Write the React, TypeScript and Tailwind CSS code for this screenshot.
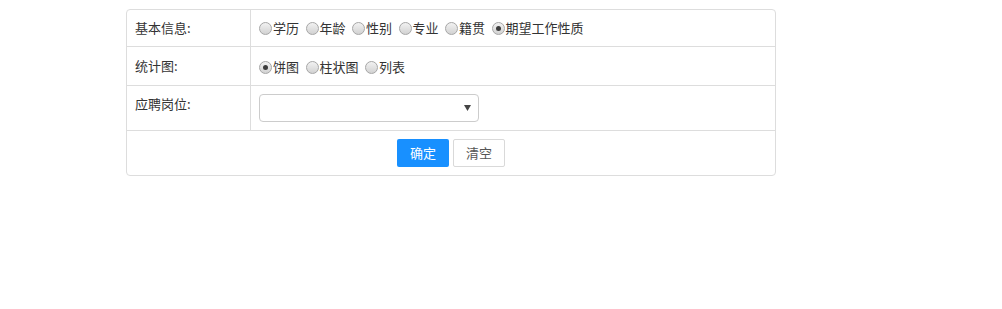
import React from "react";

const font = { fontFamily: '"Noto Sans CJK SC", "Noto Sans", sans-serif' };

function Radio({ label, checked }: { label: string; checked?: boolean }) {
  return (
    <span className="flex items-center">
      <span className="mr-[1px] flex h-[13px] w-[13px] items-center justify-center rounded-full border border-[#a6a6a6] bg-gradient-to-b from-[#f2f2f2] to-[#d2d2d2]">
        {checked && <span className="h-[5px] w-[5px] rounded-full bg-[#3c3c3c]" />}
      </span>
      <span className="text-[13px] leading-[20px] text-[#333]">{label}</span>
    </span>
  );
}

export default function App() {
  return (
    <div className="min-h-[309px] bg-white pl-[126px] pt-[9px]" style={font}>
      <div className="w-[650px] rounded-[4px] border border-[#dddddd] text-[13px] text-[#333]">
        <div className="flex h-[37px] border-b border-[#dddddd]">
          <div className="flex w-[124px] items-center border-r border-[#dddddd] pl-[8px] leading-[20px]">基本信息:</div>
          <div className="flex items-center gap-[6.5px] pl-[8px]">
            <Radio label="学历" />
            <Radio label="年龄" />
            <Radio label="性别" />
            <Radio label="专业" />
            <Radio label="籍贯" />
            <Radio label="期望工作性质" checked />
          </div>
        </div>
        <div className="flex h-[39px] border-b border-[#dddddd]">
          <div className="flex w-[124px] items-center border-r border-[#dddddd] pl-[8px] leading-[20px]">统计图:</div>
          <div className="flex items-center gap-[6.5px] pl-[8px] pt-[2px]">
            <Radio label="饼图" checked />
            <Radio label="柱状图" />
            <Radio label="列表" />
          </div>
        </div>
        <div className="flex h-[45px] border-b border-[#dddddd]">
          <div className="w-[124px] border-r border-[#dddddd] pl-[8px] pt-[8px] leading-[20px]">应聘岗位:</div>
          <div className="pl-[8px] pt-[8px]">
            <div className="flex h-[28px] w-[220px] items-center justify-end rounded-[4px] border border-[#cccccc] bg-white pr-[7px]">
              <svg width="7" height="6" viewBox="0 0 7 6">
                <polygon points="0,0 7,0 3.5,6" fill="#444" />
              </svg>
            </div>
          </div>
        </div>
        <div className="flex h-[44px] items-center justify-center gap-[4px]">
          <button className="h-[28px] w-[52px] rounded-[2px] bg-[#1890ff] text-[13px] leading-[20px] text-white">确定</button>
          <button className="h-[28px] w-[52px] rounded-[2px] border border-[#d9d9d9] bg-white text-[13px] leading-[20px] text-[#555]">清空</button>
        </div>
      </div>
    </div>
  );
}
